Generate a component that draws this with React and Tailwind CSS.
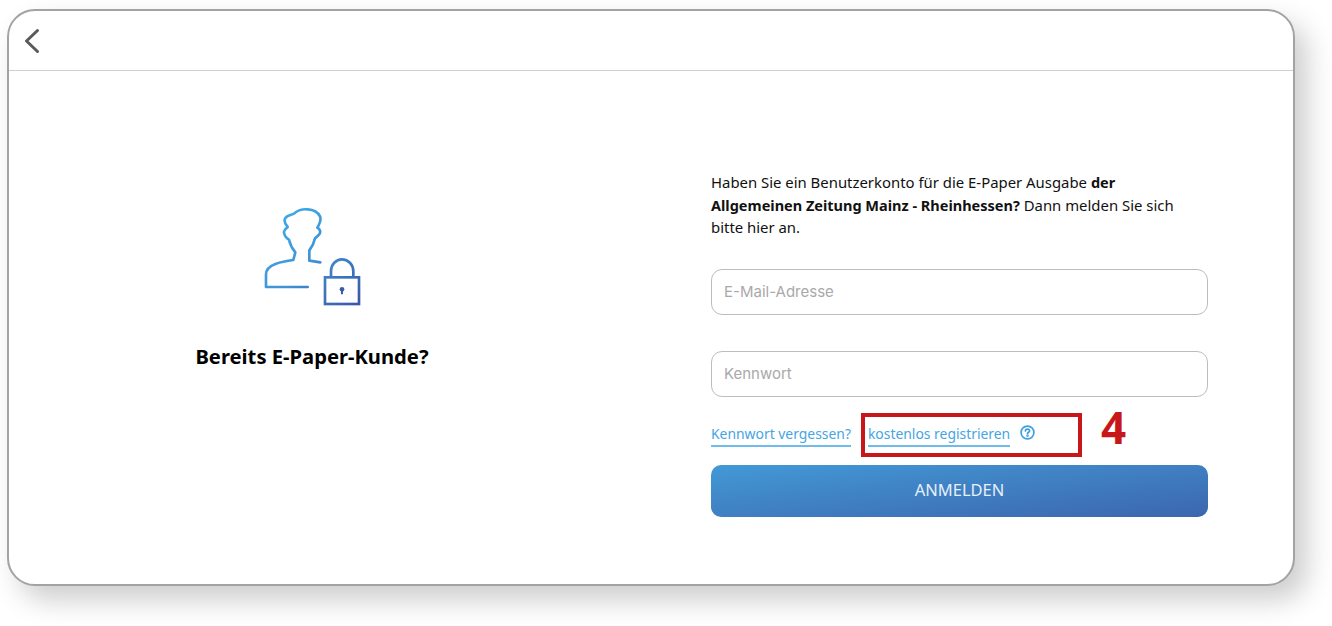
import React from "react";

const bodyFont = { fontFamily: '"Noto Sans", sans-serif' };

function LoginIcon() {
  return (
    <svg width="140" height="130" viewBox="0 0 420 390" fill="none" strokeWidth="8">
      <defs>
        <linearGradient id="personLock" x1="80" y1="60" x2="360" y2="340" gradientUnits="userSpaceOnUse">
          <stop offset="0" stopColor="#3fb0ea" />
          <stop offset="0.5" stopColor="#3f93d6" />
          <stop offset="1" stopColor="#3a57a6" />
        </linearGradient>
      </defs>
      <g transform="translate(-6 0)">
        <path
          stroke="url(#personLock)"
          strokeLinecap="round"
          strokeLinejoin="round"
          d="M203 288H78V250C78 232 92 224 108 218C125 212 145 209 160 207L166 184C158 174 150 160 147 146C138 142 131 130 132 122C133 115 140 112 143 108C136 100 131 88 137 80C143 72 155 72 162 68C172 58 188 54 203 55C220 56 234 64 240 76C245 88 238 100 232 110C240 114 243 122 238 130C234 136 228 138 225 142C222 158 214 170 208 178L208 209L241 214"
        />
        <path
          stroke="url(#personLock)"
          strokeLinecap="round"
          d="M273 256V242C273 220 288 205 306 205C324 205 340 220 340 242V256"
        />
        <rect x="255" y="259" width="102" height="80" stroke="url(#personLock)" />
        <circle cx="306" cy="295" r="7" fill="#3a5ba8" />
        <path d="M306 296V310" stroke="#3a5ba8" strokeWidth="6" />
      </g>
    </svg>
  );
}

function TextField({ placeholder }) {
  return (
    <div className="flex h-[46px] w-[497px] items-center rounded-[11px] border border-[#bdbdbd] bg-white pl-[12px]">
      <input
        type="text"
        placeholder={placeholder}
        className="w-full bg-transparent pt-[2px] text-[15px] outline-none placeholder:text-[#a9a9a9]"
        style={{ fontFamily: '"Inter", sans-serif' }}
      />
    </div>
  );
}

export default function App() {
  return (
    <div className="relative h-[626px] w-[1332px] overflow-hidden bg-white pl-[7px] pt-[9px]" style={bodyFont}>
      <div className="flex h-[577px] w-[1288px] flex-col rounded-[28px] border-2 border-[#a3a3a3] bg-white shadow-[12px_14px_28px_rgba(0,0,0,0.2)]">
        <div className="flex h-[60px] flex-none items-center border-b border-[#cfcfcf] pl-[15px]">
          <svg width="17" height="26" viewBox="0 0 17 26" fill="none" stroke="#5a5a5a" strokeWidth="3" strokeLinecap="round" strokeLinejoin="round">
            <path d="M13.5 2.5L2.5 13L13.5 23.5" />
          </svg>
        </div>

        <div className="flex flex-1">
          <div className="flex w-[606px] flex-col items-center pt-[120px]">
            <LoginIcon />
            <h1 className="mt-[21px] text-[20.2px] font-bold leading-[28px] text-black">Bereits E-Paper-Kunde?</h1>
          </div>

          <div className="ml-[96px] w-[497px] pt-[100px]">
            <p className="w-[480px] text-[14.9px] leading-[22.5px] text-[#111]">
              Haben Sie ein Benutzerkonto für die E-Paper Ausgabe <b className="text-[14.5px]">der Allgemeinen Zeitung Mainz - Rheinhessen?</b> Dann melden Sie sich bitte hier an.
            </p>
            <div className="mt-[30px] flex flex-col gap-[36px]">
              <TextField placeholder="E-Mail-Adresse" />
              <TextField placeholder="Kennwort" />
            </div>
            <div className="mt-[27px] flex items-start text-[13.9px] leading-[20px] text-[#45a5e2]">
              <a className="border-b-2 border-[#6dbcec] pb-[1px]">Kennwort vergessen?</a>
              <a className="ml-[17px] border-b-2 border-[#6dbcec] pb-[1px]">kostenlos registrieren</a>
              <svg className="ml-[10px] mt-[1px]" width="15" height="15" viewBox="0 0 15 15" fill="none" stroke="#3f9fe0" strokeWidth="1.7">
                <circle cx="7.5" cy="7.5" r="6.4" />
                <path d="M5.4 6C5.4 4.8 6.4 4.1 7.5 4.1C8.7 4.1 9.6 4.9 9.6 5.9C9.6 7.3 7.5 7.2 7.5 8.8" strokeLinecap="round" />
                <circle cx="7.5" cy="10.8" r="0.4" fill="#3f9fe0" />
              </svg>
            </div>
            <button className="mt-[18px] h-[52px] w-[497px] rounded-[10px] bg-gradient-to-br from-[#4299d6] to-[#3c66ae] text-[16.5px] text-[#e6f0fa]">
              ANMELDEN
            </button>
          </div>
        </div>
      </div>

      <div className="absolute left-[861px] top-[413px] h-[44px] w-[221px] border-[4px] border-[#c8171a]" />
      <div className="absolute left-[1101px] top-[402px] text-[44px] font-bold leading-[50px] text-[#c8171a]">4</div>
    </div>
  );
}
